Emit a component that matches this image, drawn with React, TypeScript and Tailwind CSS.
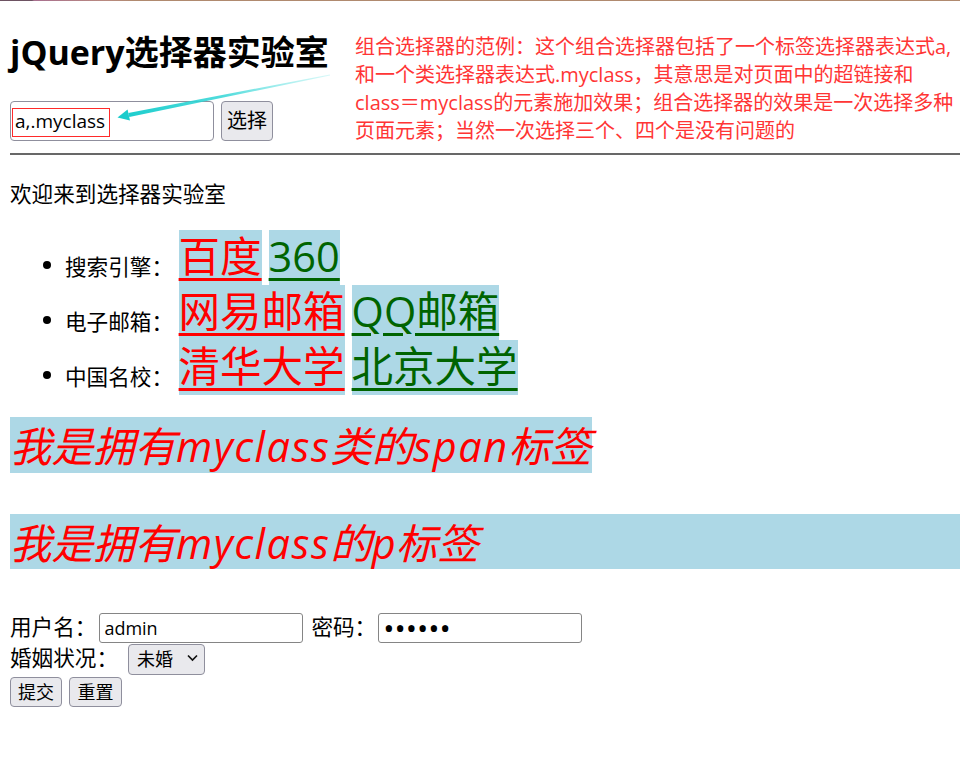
import { useState } from 'react'

const font = "font-['Open_Sans','Noto_Sans_CJK_SC',sans-serif]"

const links = [
  { label: '搜索引擎：', a: '百度', b: '360' },
  { label: '电子邮箱：', a: '网易邮箱', b: 'QQ邮箱' },
  { label: '中国名校：', a: '清华大学', b: '北京大学' },
]

const note = [
  '组合选择器的范例：这个组合选择器包括了一个标签选择器表达式a,',
  '和一个类选择器表达式.myclass，其意思是对页面中的超链接和',
  'class＝myclass的元素施加效果；组合选择器的效果是一次选择多种',
  '页面元素；当然一次选择三个、四个是没有问题的',
]

function Arrow() {
  // annotation arrow drawn over the header
  return (
    <svg className="pointer-events-none absolute left-0 top-0" width="960" height="160" viewBox="0 0 960 160">
      <defs>
        <linearGradient id="arrowFade" x1="330" y1="75" x2="120" y2="117" gradientUnits="userSpaceOnUse">
          <stop offset="0" stopColor="#7ee8e8" stopOpacity="0.3" />
          <stop offset="0.5" stopColor="#33d6d6" stopOpacity="0.85" />
          <stop offset="1" stopColor="#19cccc" />
        </linearGradient>
      </defs>
      <polygon points="330.1,75.5 329.9,74.5 128.3,112.9 129.3,116.9" fill="url(#arrowFade)" />
      <polygon points="117.5,117.5 130,120.5 127.6,109.5" fill="#19cccc" />
    </svg>
  )
}

export default function App() {
  const [query, setQuery] = useState('a,.myclass')

  return (
    <div className={`relative min-h-[758px] overflow-hidden bg-white text-black ${font}`}>
      <div className="h-px bg-[linear-gradient(90deg,#6d5262_0px,#6d5262_32px,#a8708f_34px,#b98a80_105px,#b08a6f_135px)]" />

      <div className="pl-[10px]">
        <header className="flex">
          <div className="w-[345px] shrink-0">
            <h1 className="mt-[31px] text-[34px] font-bold leading-[40px] whitespace-nowrap">jQuery选择器实验室</h1>
            <div className="mt-[29px] flex gap-[7px]">
              <input
                value={query}
                onChange={(e) => setQuery(e.currentTarget.value)}
                className="h-[40px] w-[204px] rounded-[4px] border border-[#8f8f9d] px-[4px] text-[19px] outline-none"
              />
              <button className="h-[40px] w-[52px] rounded-[4px] border border-[#8f8f9d] bg-[#e9e9ed] text-[20px]">
                选择
              </button>
            </div>
          </div>
          <div className="mt-[32px] text-[20px] leading-[28px] whitespace-nowrap text-[#ff3535]">
            {note.map((line) => (
              <p key={line}>{line}</p>
            ))}
          </div>
        </header>

        <hr className="mt-[8px] border-0 border-t-2 border-[#686868]" />

        <p className="mt-[24px] text-[21.6px] leading-[30px]">欢迎来到选择器实验室</p>

        <ul className="mt-[21px] list-disc pl-[55px] text-[21.6px] leading-[30px]">
          {links.map((row) => (
            <li key={row.label}>
              <span className="align-[-3px]">{row.label}</span>{' '}
              <a className="inline-block h-[55px] bg-[#add8e6] text-[41.5px] leading-[52px] text-[#ff0000] underline decoration-[3px] underline-offset-[6px]">
                {row.a}
              </a>
              <a className="ml-[7px] inline-block h-[55px] bg-[#add8e6] text-[41.5px] leading-[52px] text-[#006400] underline decoration-[3px] underline-offset-[6px]">
                {row.b}
              </a>
            </li>
          ))}
        </ul>

        <div className="mt-[22px] flex">
          <span className="h-[56px] bg-[#add8e6] text-[41.5px] leading-[58px] italic text-[#ff0000]">
            我是拥有<span className="tracking-[1.5px]">myclass</span>类的<span className="tracking-[1.5px]">span</span>标签
          </span>
        </div>
        <p className="mt-[41px] h-[55px] bg-[#add8e6] text-[41.5px] leading-[59px] italic text-[#ff0000]">
          我是拥有<span className="tracking-[1.5px]">myclass</span>的p标签
        </p>

        <form className="mt-[43px] text-[21.6px]" onSubmit={(e) => e.preventDefault()}>
          <div className="flex h-[31px] items-center">
            <span>用户名：</span>
            <input
              defaultValue="admin"
              className="ml-[3px] h-[30px] w-[204px] rounded-[3px] border border-[#858585] px-[4px] text-[18px] outline-none"
            />
            <span className="ml-[8px]">密码：</span>
            <input
              type="password"
              defaultValue="123456"
              className="ml-[2px] h-[30px] w-[204px] rounded-[3px] border border-[#858585] px-[4px] text-[30px] leading-none outline-none"
            />
          </div>
          <div className="flex h-[31px] items-center">
            <span>婚姻状况：</span>
            <div className="relative ml-[10px]">
              <select className="h-[31px] w-[77px] appearance-none rounded-[4px] border border-[#8f8f9d] bg-[#e9e9ed] pl-[8px] text-[18px] outline-none">
                <option>未婚</option>
                <option>已婚</option>
              </select>
              <svg className="pointer-events-none absolute left-[59px] top-[12px]" width="11" height="8" viewBox="0 0 11 8">
                <path d="M1 1.5l4.5 4.5 4.5-4.5" fill="none" stroke="#111" strokeWidth="1.7" />
              </svg>
            </div>
          </div>
          <div className="mt-[3px] flex gap-[7px]">
            <button type="submit" className="h-[30px] w-[52px] rounded-[4px] border border-[#8f8f9d] bg-[#e9e9ed] text-[18px]">
              提交
            </button>
            <button type="reset" className="h-[30px] w-[53px] rounded-[4px] border border-[#8f8f9d] bg-[#e9e9ed] text-[18px]">
              重置
            </button>
          </div>
        </form>
      </div>

      <div className="pointer-events-none absolute left-[12px] top-[108px] h-[29px] w-[98px] border border-[#ff2a2a]" />
      <Arrow />
    </div>
  )
}
